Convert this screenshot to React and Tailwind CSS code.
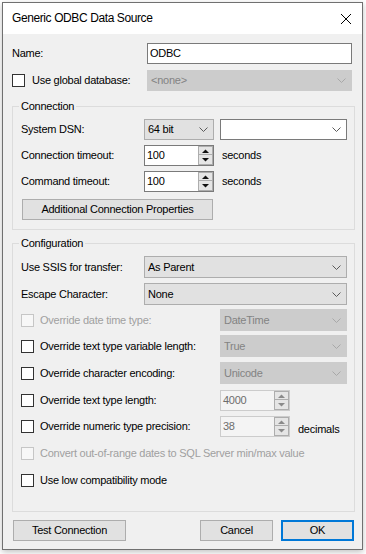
import React from "react";

const ff = "font-['Liberation_Sans',Arial,sans-serif]";

function Chevron({ off }) {
  return (
    <svg width="9" height="5" viewBox="0 0 9 5" className="shrink-0">
      <polyline
        points="0.5,0.5 4.5,4.5 8.5,0.5"
        fill="none"
        stroke={off ? "#a8a8a8" : "#5a5a5a"}
        strokeWidth="1"
      />
    </svg>
  );
}

function Combo({ value, kind = "button", className = "" }) {
  const look =
    kind === "edit"
      ? "bg-white border-[#7a7a7a] text-black"
      : kind === "off"
      ? "bg-[#cccccc] border-[#cccccc] text-[#838383]"
      : "bg-[#e1e1e1] border-[#adadad] text-black";
  return (
    <div className={`flex items-center border pl-[3px] pr-[5px] ${look} ${className}`}>
      <span className="flex-1 truncate">{value}</span>
      <Chevron off={kind === "off"} />
    </div>
  );
}

function Arrow({ up, off }) {
  return (
    <svg width="7" height="4" viewBox="0 0 7 4">
      <polygon
        points={up ? "0,4 7,4 3.5,0.5" : "0,0 7,0 3.5,3.5"}
        fill={off ? "#8a8a8a" : "#111111"}
      />
    </svg>
  );
}

function Spin({ value, off }) {
  return (
    <div
      className={`flex h-[21px] w-[70px] border ${
        off ? "border-[#cccccc] bg-[#f4f4f4] text-[#6d6d6d]" : "border-[#7a7a7a] bg-white text-black"
      }`}
    >
      <span className="flex-1 pl-[2px] leading-[18px]">{value}</span>
      <div className="flex w-[15px] flex-col">
        <div className="flex h-[9px] items-center justify-center border border-[#adadad] bg-[#e5e5e5]">
          <Arrow up off={off} />
        </div>
        <div className="flex h-[10px] items-center justify-center border border-t-0 border-[#adadad] bg-[#e5e5e5]">
          <Arrow off={off} />
        </div>
      </div>
    </div>
  );
}

function Check({ off }) {
  return (
    <span
      className={`block h-[13px] w-[13px] shrink-0 border ${
        off ? "border-[#c6c6c6] bg-[#f7f7f7]" : "border-[#333333] bg-white"
      }`}
    />
  );
}

function Btn({ children, className = "" }) {
  return (
    <button
      className={`flex h-[21px] items-center justify-center border border-[#adadad] bg-[#e1e1e1] text-black ${className}`}
    >
      {children}
    </button>
  );
}

function Group({ title, className = "", children }) {
  return (
    <div className={`w-[343px] border border-[#dcdcdc] pl-[8px] ${className}`}>
      <div className="-ml-[2px] -mt-[8px] w-fit bg-[#f0f0f0] px-[2px] leading-[15px]">{title}</div>
      {children}
    </div>
  );
}

function OptRow({ label, off, className = "", children }) {
  return (
    <div className={`flex items-center whitespace-nowrap ${className}`}>
      <div className="flex min-w-[199px] items-center gap-[6px]">
        <Check off={off} />
        <span className={off ? "text-[#a0a0a0]" : ""}>{label}</span>
      </div>
      {children}
    </div>
  );
}

export default function App() {
  return (
    <div className={`h-[554px] w-[366px] overflow-hidden bg-white pl-[2px] pt-[2px] text-[11px] leading-[15px] tracking-[-0.25px] text-black ${ff}`}>
      <div className="flex h-[548px] w-[361px] flex-col border border-[#707070] bg-[#f0f0f0] shadow-[0_2px_6px_rgba(0,0,0,0.25)]">
        {/* title bar */}
        <div className="flex h-[31px] items-center justify-between bg-white pl-[9px] pr-[11px]">
          <span className="text-[12px] tracking-[-0.4px]">Generic ODBC Data Source</span>
          <svg width="10" height="10" viewBox="0 0 10 10">
            <path d="M0,0 L10,10 M10,0 L0,10" stroke="#000" strokeWidth="1" />
          </svg>
        </div>

        <div className="flex flex-col pl-[9px]">
          <div className="mt-[9px] flex h-[21px] items-center">
            <span className="w-[135px]">Name:</span>
            <div className="flex h-[21px] w-[205px] items-center border border-[#7a7a7a] bg-white pl-[2px]">ODBC</div>
          </div>
          <div className="mt-[6px] flex h-[21px] items-center">
            <div className="flex w-[135px] items-center gap-[7px]">
              <Check />
              <span>Use global database:</span>
            </div>
            <Combo value="<none>" kind="off" className="h-[21px] w-[205px]" />
          </div>

          {/* Connection */}
          <Group title="Connection" className="mt-[15px] h-[124px]">
            <div className="mt-[5px] flex h-[21px] items-center">
              <span className="w-[123px]">System DSN:</span>
              <Combo value="64 bit" className="h-[21px] w-[70px]" />
              <Combo value="" kind="edit" className="ml-[6px] h-[21px] w-[127px]" />
            </div>
            <div className="mt-[5px] flex h-[21px] items-center">
              <span className="w-[123px]">Connection timeout:</span>
              <Spin value="100" />
              <span className="ml-[8px]">seconds</span>
            </div>
            <div className="mt-[5px] flex h-[21px] items-center">
              <span className="w-[123px]">Command timeout:</span>
              <Spin value="100" />
              <span className="ml-[8px]">seconds</span>
            </div>
            <Btn className="ml-[1px] mt-[7px] w-[191px]">Additional Connection Properties</Btn>
          </Group>

          {/* Configuration */}
          <Group title="Configuration" className="mt-[13px] h-[269px]">
            <div className="mt-[5px] flex h-[22px] items-center">
              <span className="w-[123px]">Use SSIS for transfer:</span>
              <Combo value="As Parent" className="h-[22px] w-[203px]" />
            </div>
            <div className="mt-[5px] flex h-[22px] items-center">
              <span className="w-[123px]">Escape Character:</span>
              <Combo value="None" className="h-[22px] w-[203px]" />
            </div>
            <OptRow label="Override date time type:" off className="mt-[4px] h-[22px]">
              <Combo value="DateTime" kind="off" className="h-[22px] w-[127px]" />
            </OptRow>
            <OptRow label="Override text type variable length:" className="mt-[4px] h-[22px]">
              <Combo value="True" kind="off" className="h-[22px] w-[127px]" />
            </OptRow>
            <OptRow label="Override character encoding:" className="mt-[5px] h-[22px]">
              <Combo value="Unicode" kind="off" className="h-[22px] w-[127px]" />
            </OptRow>
            <OptRow label="Override text type length:" className="mt-[6px] h-[21px]">
              <Spin value="4000" off />
            </OptRow>
            <OptRow label="Override numeric type precision:" className="mt-[5px] h-[21px]">
              <Spin value="38" off />
              <span className="ml-[8px] mt-[5px]">decimals</span>
            </OptRow>
            <OptRow label="Convert out-of-range dates to SQL Server min/max value" off className="mt-[8px] h-[16px]" />
            <OptRow label="Use low compatibility mode" className="mt-[11px] h-[16px]" />
          </Group>

          <div className="mt-[8px] flex items-center">
            <Btn className="ml-[1px] w-[113px]">Test Connection</Btn>
            <Btn className="ml-[74px] w-[73px]">Cancel</Btn>
            <button className="ml-[8px] flex h-[21px] w-[73px] items-center justify-center border-2 border-[#0078d7] bg-[#e1e1e1] text-black">
              OK
            </button>
          </div>
        </div>
      </div>
    </div>
  );
}
